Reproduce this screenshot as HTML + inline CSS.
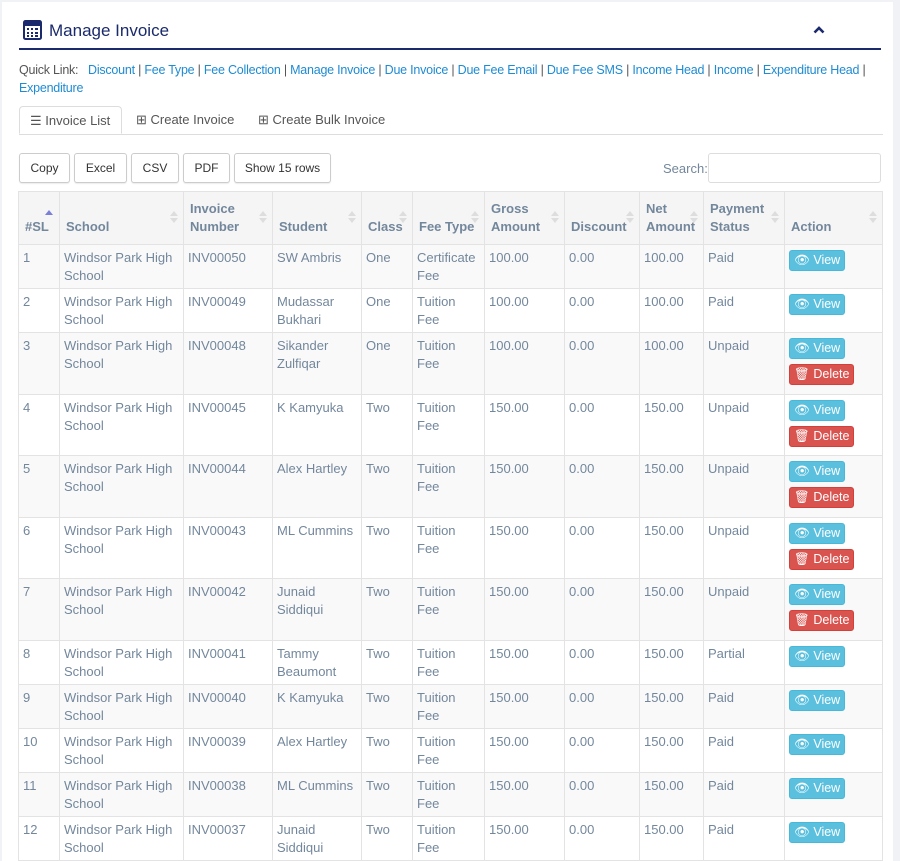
<!DOCTYPE html>
<html><head><meta charset="utf-8"><style>
body{margin:0;background:#F0F2F5;font-family:"Liberation Sans",sans-serif;font-size:13px;color:#73879C;}
.panel{position:absolute;left:2px;top:2px;width:891px;height:859px;background:#fff;}
.title{position:absolute;left:17px;top:16px;width:862px;height:30px;border-bottom:2px solid #1A2A6C;}
.title h2{margin:0;position:absolute;left:30px;top:3px;font-size:17px;font-weight:normal;color:#1A2A6C;}
.ql{position:absolute;left:17px;top:59px;width:875px;line-height:18px;color:#555;font-size:12.5px;letter-spacing:-0.23px;white-space:nowrap}
.ql a{color:#1E8BD3;text-decoration:none}
.tabs{position:absolute;left:17px;top:104px;width:864px;height:28px;border-bottom:1px solid #ddd;}
.tab{position:absolute;top:0;height:28px;line-height:28px;color:#555;font-size:13px}
.tab.act{border:1px solid #ddd;border-bottom:1px solid #fff;border-radius:4px 4px 0 0;background:#fff;left:0;width:103px;padding-left:10px;box-sizing:border-box}
.btn{position:absolute;top:153px;height:30px;border:1px solid #ccc;border-radius:3px;box-sizing:border-box;line-height:28px;text-align:center;color:#333;font-size:12px;background:#fff;box-shadow:0 1px 1px rgba(0,0,0,.08)}
.search{position:absolute;left:663px;top:161px;color:#73879C}
.sinput{position:absolute;left:708px;top:153px;width:173px;height:30px;border:1px solid #ddd;border-radius:3px;box-sizing:border-box}
table{position:absolute;left:18px;top:191px;width:864px;border-collapse:collapse;table-layout:fixed}
th,td{border:1px solid #e3e3e3;padding:4px 4px 3px;line-height:18px;vertical-align:top;text-align:left}
th{background:#f5f5f5;font-weight:bold;vertical-align:bottom;padding:8px 4px 8px 6px;position:relative;height:36px;color:#73879C}
th:after{content:"";position:absolute;right:5px;top:19px;width:0;height:0;border-left:4px solid transparent;border-right:4px solid transparent;border-bottom:5px solid #ddd}
th:before{content:"";position:absolute;right:5px;top:26px;width:0;height:0;border-left:4px solid transparent;border-right:4px solid transparent;border-top:5px solid #ddd}
th.s:after{border-bottom-color:#7b7fd8;right:auto;left:26px;top:18px}
th.s:before{display:none}
tbody tr:nth-child(odd) td{background:#f9f9f9}
td{height:34px}
.v,.d{display:inline-block;color:#fff;font-size:12.5px;line-height:19px;padding:0 4px;border-radius:3px}
.v{background:#5bc0de;border:1px solid #46b8da;margin-top:1px}
.d{background:#d9534f;border:1px solid #d43f3a;margin-top:5px;margin-bottom:5.6px}
</style></head><body>
<div class="panel">
<div class="title">
<svg style="position:absolute;left:4px;top:2px" width="19" height="20" viewBox="0 0 19 20"><rect x="1" y="1" width="17" height="18" rx="1.5" fill="none" stroke="#1A2A6C" stroke-width="2"/><rect x="1" y="1" width="17" height="5" fill="#1A2A6C"/><g fill="#1A2A6C"><rect x="4" y="8" width="2" height="2"/><rect x="8" y="8" width="2" height="2"/><rect x="12" y="8" width="3" height="2"/><rect x="4" y="12" width="2" height="2"/><rect x="8" y="12" width="2" height="2"/><rect x="12" y="12" width="3" height="2"/><rect x="4" y="15" width="2" height="2"/><rect x="8" y="15" width="2" height="2"/><rect x="12" y="15" width="3" height="2"/></g></svg>
<h2>Manage Invoice</h2>
<svg style="position:absolute;left:794px;top:8px" width="12" height="8" viewBox="0 0 12 8"><path d="M1.5 6.5 L6 2 L10.5 6.5" fill="none" stroke="#1A2A6C" stroke-width="2.6"/></svg>
</div>
<div class="ql">Quick Link: &nbsp;&nbsp;<a>Discount</a> | <a>Fee Type</a> | <a>Fee Collection</a> | <a>Manage Invoice</a> | <a>Due Invoice</a> | <a>Due Fee Email</a> | <a>Due Fee SMS</a> | <a>Income Head</a> | <a>Income</a> | <a>Expenditure Head</a> |<br><a>Expenditure</a></div>
<div class="tabs">
<div class="tab act">☰ Invoice List</div>
<div class="tab" style="left:117px">⊞ Create Invoice</div>
<div class="tab" style="left:239px">⊞ Create Bulk Invoice</div>
</div>
</div>
<div class="btn" style="left:19px;width:51px">Copy</div>
<div class="btn" style="left:74px;width:53px">Excel</div>
<div class="btn" style="left:131px;width:48px">CSV</div>
<div class="btn" style="left:183px;width:47px">PDF</div>
<div class="btn" style="left:234px;width:97px">Show 15 rows</div>
<div class="search">Search:</div><div class="sinput"></div>
<table>
<colgroup><col style="width:41px"><col style="width:124px"><col style="width:89px"><col style="width:89px"><col style="width:51px"><col style="width:72px"><col style="width:80px"><col style="width:75px"><col style="width:64px"><col style="width:81px"><col style="width:98px"></colgroup>
<thead><tr><th class="s">#SL</th><th>School</th><th>Invoice Number</th><th>Student</th><th>Class</th><th>Fee Type</th><th>Gross Amount</th><th>Discount</th><th>Net Amount</th><th>Payment Status</th><th>Action</th></tr></thead>
<tbody>
<tr><td>1</td><td>Windsor Park High School</td><td>INV00050</td><td>SW Ambris</td><td>One</td><td>Certificate Fee</td><td>100.00</td><td>0.00</td><td>100.00</td><td>Paid</td><td><span class="v">👁 View</span></td></tr>
<tr><td>2</td><td>Windsor Park High School</td><td>INV00049</td><td>Mudassar Bukhari</td><td>One</td><td>Tuition Fee</td><td>100.00</td><td>0.00</td><td>100.00</td><td>Paid</td><td><span class="v">👁 View</span></td></tr>
<tr><td>3</td><td>Windsor Park High School</td><td>INV00048</td><td>Sikander Zulfiqar</td><td>One</td><td>Tuition Fee</td><td>100.00</td><td>0.00</td><td>100.00</td><td>Unpaid</td><td><span class="v">👁 View</span><br><span class="d">🗑 Delete</span></td></tr>
<tr><td>4</td><td>Windsor Park High School</td><td>INV00045</td><td>K Kamyuka</td><td>Two</td><td>Tuition Fee</td><td>150.00</td><td>0.00</td><td>150.00</td><td>Unpaid</td><td><span class="v">👁 View</span><br><span class="d">🗑 Delete</span></td></tr>
<tr><td>5</td><td>Windsor Park High School</td><td>INV00044</td><td>Alex Hartley</td><td>Two</td><td>Tuition Fee</td><td>150.00</td><td>0.00</td><td>150.00</td><td>Unpaid</td><td><span class="v">👁 View</span><br><span class="d">🗑 Delete</span></td></tr>
<tr><td>6</td><td>Windsor Park High School</td><td>INV00043</td><td>ML Cummins</td><td>Two</td><td>Tuition Fee</td><td>150.00</td><td>0.00</td><td>150.00</td><td>Unpaid</td><td><span class="v">👁 View</span><br><span class="d">🗑 Delete</span></td></tr>
<tr><td>7</td><td>Windsor Park High School</td><td>INV00042</td><td>Junaid Siddiqui</td><td>Two</td><td>Tuition Fee</td><td>150.00</td><td>0.00</td><td>150.00</td><td>Unpaid</td><td><span class="v">👁 View</span><br><span class="d">🗑 Delete</span></td></tr>
<tr><td>8</td><td>Windsor Park High School</td><td>INV00041</td><td>Tammy Beaumont</td><td>Two</td><td>Tuition Fee</td><td>150.00</td><td>0.00</td><td>150.00</td><td>Partial</td><td><span class="v">👁 View</span></td></tr>
<tr><td>9</td><td>Windsor Park High School</td><td>INV00040</td><td>K Kamyuka</td><td>Two</td><td>Tuition Fee</td><td>150.00</td><td>0.00</td><td>150.00</td><td>Paid</td><td><span class="v">👁 View</span></td></tr>
<tr><td>10</td><td>Windsor Park High School</td><td>INV00039</td><td>Alex Hartley</td><td>Two</td><td>Tuition Fee</td><td>150.00</td><td>0.00</td><td>150.00</td><td>Paid</td><td><span class="v">👁 View</span></td></tr>
<tr><td>11</td><td>Windsor Park High School</td><td>INV00038</td><td>ML Cummins</td><td>Two</td><td>Tuition Fee</td><td>150.00</td><td>0.00</td><td>150.00</td><td>Paid</td><td><span class="v">👁 View</span></td></tr>
<tr><td>12</td><td>Windsor Park High School</td><td>INV00037</td><td>Junaid Siddiqui</td><td>Two</td><td>Tuition Fee</td><td>150.00</td><td>0.00</td><td>150.00</td><td>Paid</td><td><span class="v">👁 View</span></td></tr>
</tbody></table>
</body></html>
